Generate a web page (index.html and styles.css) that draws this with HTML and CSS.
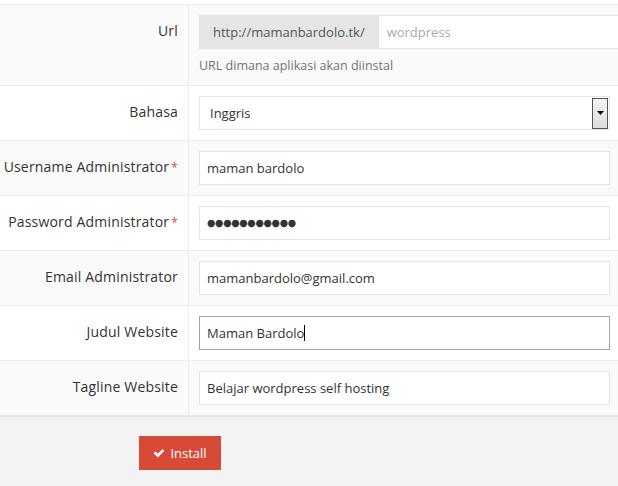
FILE: index.html
```html
<!DOCTYPE html>
<html>
<head>
<meta charset="utf-8">
<link rel="stylesheet" href="styles.css">
</head>
<body>
<div class="page">
  <div class="form">
    <div class="row striped">
      <div class="label">Url</div>
      <div class="field">
        <div class="input-group">
          <span class="addon">http://mamanbardolo.tk/</span>
          <span class="input grow placeholder">wordpress</span>
        </div>
        <div class="help">URL dimana aplikasi akan diinstal</div>
      </div>
    </div>
    <div class="row">
      <div class="label">Bahasa</div>
      <div class="field">
        <div class="input select">
          <span>Inggris</span>
          <span class="drop"><svg width="7" height="4" viewBox="0 0 7 4"><path d="M0 0H7L3.5 4Z" fill="#000"/></svg></span>
        </div>
      </div>
    </div>
    <div class="row striped">
      <div class="label">Username Administrator<span class="req">*</span></div>
      <div class="field"><div class="input">maman bardolo</div></div>
    </div>
    <div class="row">
      <div class="label">Password Administrator<span class="req">*</span></div>
      <div class="field"><div class="input dots">●●●●●●●●●●●</div></div>
    </div>
    <div class="row striped">
      <div class="label">Email Administrator</div>
      <div class="field"><div class="input">mamanbardolo@gmail.com</div></div>
    </div>
    <div class="row">
      <div class="label">Judul Website</div>
      <div class="field"><div class="input focus">Maman Bardolo<span class="caret"></span></div></div>
    </div>
    <div class="row striped last">
      <div class="label">Tagline Website</div>
      <div class="field"><div class="input">Belajar wordpress self hosting</div></div>
    </div>
  </div>
  <div class="footer">
    <button class="btn"><svg class="check" width="12" height="12" viewBox="0 0 1792 1792"><path fill="#fff" d="M1671 566q0 40-28 68l-724 724-136 136q-28 28-68 28t-68-28l-136-136-362-362q-28-28-28-68t28-68l136-136q28-28 68-28t68 28l294 295 656-657q28-28 68-28t68 28l136 136q28 28 28 68z"/></svg>Install</button>
  </div>
</div>
</body>
</html>
```
FILE: styles.css
```css
html, body {
  margin: 0;
  padding: 0;
  background: #fff;
  overflow: hidden;
}
body {
  font-family: "Open Sans", "Noto Sans", sans-serif;
  font-size: 13px;
  color: #333;
  width: 618px;
  height: 486px;
}
.page {
  padding-top: 4px;
  display: flex;
  flex-direction: column;
  height: 482px;
}
.form {
  border-top: 1px solid #eeeeee;
}
.row {
  display: grid;
  grid-template-columns: 189px 1fr;
  border-bottom: 1px solid #eeeeee;
  background: #fff;
}
.row.striped {
  background: #fafafa;
}
.row.last {
  border-bottom: 1px solid #e6e6e6;
}
.label {
  border-right: 1px solid #eeeeee;
  text-align: right;
  padding: 17px 10px 0 0;
  line-height: 18px;
  font-size: 14px;
  letter-spacing: 0.18px;
  color: #333;
  white-space: nowrap;
}
.req {
  color: #e2463a;
  margin-left: 2px;
  font-size: 12px;
}
.field {
  padding: 10px 8px 10px 10px;
  min-width: 0;
}
.input {
  height: 34px;
  box-sizing: border-box;
  border: 1px solid #e5e5e5;
  background: #fff;
  padding: 0 7px;
  line-height: 32px;
  color: #333;
  white-space: nowrap;
  display: flex;
  align-items: center;
}
.input-group {
  display: flex;
  width: 440px;
  height: 34px;
}
.addon {
  background: #e5e5e5;
  color: #555;
  padding: 0 14px 0 14px;
  line-height: 34px;
  height: 34px;
  white-space: nowrap;
}
.input.grow {
  flex: 1;
  border-left: none;
  padding-left: 8px;
}
.placeholder {
  color: #aaa;
}
.help {
  margin-top: 7px;
  line-height: 19px;
  color: #737373;
  font-size: 12.5px;
}
.select {
  justify-content: space-between;
  padding: 0 0 0 10px;
}
.drop {
  width: 14px;
  height: 29px;
  border: 1px solid #555;
  margin-right: 1px;
  background: linear-gradient(#f4f4f4, #dcdcdc);
  display: flex;
  align-items: center;
  justify-content: center;
}
.dots {
  font-family: "DejaVu Sans", sans-serif;
  font-size: 9.6px;
  color: #333;
  letter-spacing: -0.3px;
}
.focus {
  border-color: #a5a5a5;
}
.caret {
  display: inline-block;
  width: 1px;
  height: 16px;
  background: #000;
  margin-left: 0;
}
.footer {
  flex: 1;
  background: #f3f3f3;
  border-top: 1px solid #e6e6e6;
  padding: 19px 0 0 139px;
}
.btn {
  width: 82px;
  height: 34px;
  border: none;
  background: #d84a38;
  color: #fff;
  font-family: "Open Sans", "Noto Sans", sans-serif;
  font-size: 13px;
  display: flex;
  align-items: center;
  justify-content: center;
  gap: 5px;
  padding: 0;
}
.check {
  display: block;
}
```
